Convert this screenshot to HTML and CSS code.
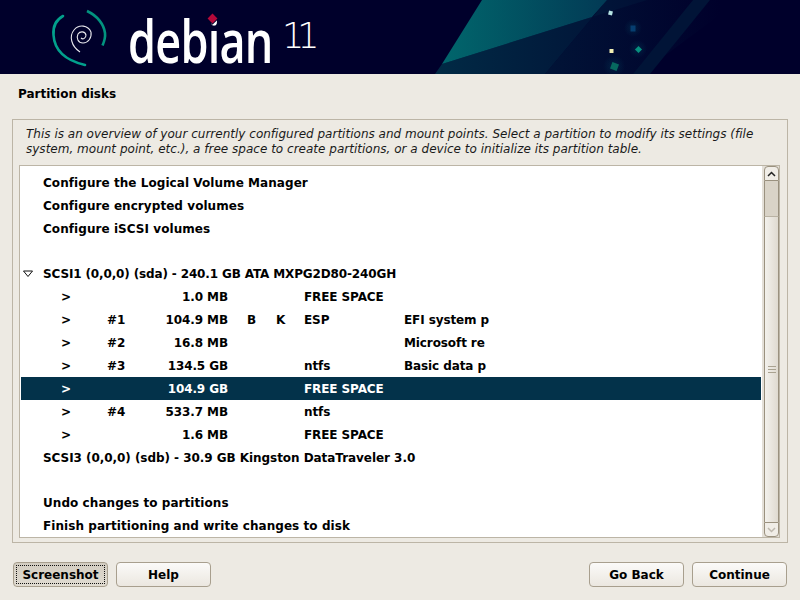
FILE: index.html
```html
<!DOCTYPE html>
<html lang="en">
<head>
<meta charset="utf-8">
<title>Partition disks</title>
<link rel="stylesheet" href="styles.css">
</head>
<body>
<header class="banner">
  <svg class="rays" viewBox="0 0 800 74" width="800" height="74" aria-hidden="true">
    <defs>
      <linearGradient id="teal" x1="442" y1="0" x2="607" y2="0" gradientUnits="userSpaceOnUse">
        <stop offset="0" stop-color="#01666c"/>
        <stop offset="1" stop-color="#023a55"/>
      </linearGradient>
      <linearGradient id="navy" x1="435" y1="0" x2="650" y2="0" gradientUnits="userSpaceOnUse">
        <stop offset="0" stop-color="#012a45"/>
        <stop offset="1" stop-color="#010f35"/>
      </linearGradient>
      <linearGradient id="far" x1="545" y1="0" x2="720" y2="0" gradientUnits="userSpaceOnUse">
        <stop offset="0" stop-color="#011437"/>
        <stop offset="1" stop-color="#00002b"/>
      </linearGradient>
      <radialGradient id="glow">
        <stop offset="0" stop-color="#04506a" stop-opacity=".3"/>
        <stop offset="1" stop-color="#04506a" stop-opacity="0"/>
      </radialGradient>
    </defs>
    <polygon points="545,74 607,0 740,0 640,74" fill="url(#far)"/>
    <polygon points="435,74 442,64 592,17 647,0 607,0 545,74" fill="url(#navy)"/>
    <polygon points="633,74 693,0 710,0 650,74" fill="#011437"/>
    <polygon points="482,0 607,0 592,17 442,64" fill="url(#teal)"/>
    <circle cx="633" cy="28" r="9" fill="url(#glow)"/>
    <circle cx="638" cy="49" r="9" fill="url(#glow)"/>
    <circle cx="614" cy="66" r="11" fill="url(#glow)"/>
    <rect x="608.500" y="11" width="4" height="4" transform="rotate(15 610.500 13)" fill="#b5e3e3"/>
    <rect x="630.500" y="25.500" width="5" height="6" fill="#063e70"/>
    <rect x="609.500" y="49" width="4" height="4" fill="#f2efb4"/>
    <rect x="636" y="47" width="5" height="5" transform="rotate(45 638.500 49.500)" fill="#07907f"/>
    <rect x="611" y="63" width="7" height="7" transform="rotate(20 614.500 66.500)" fill="#07695f"/>
  </svg>
  <svg class="swirl" viewBox="0 0 90 65" width="90" height="65" aria-hidden="true">
    <path d="M33 11C24 16 23 24 23.500 30C24.500 47 38 56 55 60" fill="none" stroke="#02a08c" stroke-width="2.600" stroke-linecap="round"/>
    <path d="M57 6C68 11 74 20 75 28C75.500 32 74 37 72.500 40.500" fill="none" stroke="#02937f" stroke-width="2.600"/>
    <path d="M61 27C58 20 49 19 44 25C39 31 41 41 50 47M61 27C62 33 58 38 53 38C48 38 46 33 48 29C50 26 55 26 56 30C56 33 53 35 51 33" fill="none" stroke="#e8e8ee" stroke-width="1.100"/>
  </svg>
  <div class="wordmark">
    <span class="debian">debian</span>
    <span class="diamond"></span>
    <span class="version">11</span>
  </div>
</header>

<main class="page">
  <h1 class="title">Partition disks</h1>
  <section class="frame">
    <p class="help">This is an overview of your currently configured partitions and mount points. Select a partition to modify its settings (file system, mount point, etc.), a free space to create partitions, or a device to initialize its partition table.</p>
    <div class="listbox">
      <div class="list">
        <div class="row">Configure the Logical Volume Manager</div>
        <div class="row">Configure encrypted volumes</div>
        <div class="row">Configure iSCSI volumes</div>
        <div class="row blank"></div>
        <div class="row device-a"><svg class="expander" viewBox="0 0 12 8" width="12" height="8" aria-hidden="true"><path d="M1.500 1H10.500L6 6.500Z" fill="#fff" stroke="#111" stroke-width="1"/></svg>SCSI1 (0,0,0) (sda) - 240.1 GB ATA MXPG2D80-240GH</div>
        <div class="row part"><span>&gt;</span><span></span><span class="size">1.0 MB</span><span></span><span></span><span></span><span>FREE SPACE</span><span></span></div>
        <div class="row part"><span>&gt;</span><span>#1</span><span class="size">104.9 MB</span><span></span><span>B</span><span>K</span><span>ESP</span><span>EFI system p</span></div>
        <div class="row part"><span>&gt;</span><span>#2</span><span class="size">16.8 MB</span><span></span><span></span><span></span><span></span><span>Microsoft re</span></div>
        <div class="row part"><span>&gt;</span><span>#3</span><span class="size">134.5 GB</span><span></span><span></span><span></span><span>ntfs</span><span>Basic data p</span></div>
        <div class="row part selected"><span>&gt;</span><span></span><span class="size">104.9 GB</span><span></span><span></span><span></span><span>FREE SPACE</span><span></span></div>
        <div class="row part"><span>&gt;</span><span>#4</span><span class="size">533.7 MB</span><span></span><span></span><span></span><span>ntfs</span><span></span></div>
        <div class="row part"><span>&gt;</span><span></span><span class="size">1.6 MB</span><span></span><span></span><span></span><span>FREE SPACE</span><span></span></div>
        <div class="row device-b">SCSI3 (0,0,0) (sdb) - 30.9 GB Kingston DataTraveler 3.0</div>
        <div class="row blank"></div>
        <div class="row">Undo changes to partitions</div>
        <div class="row">Finish partitioning and write changes to disk</div>
      </div>
      <div class="scrollbar" aria-hidden="true">
        <div class="step step-up"><svg viewBox="0 0 9 6" width="9" height="6"><path d="M1 5L4.500 1.500L8 5" fill="none" stroke="#222" stroke-width="1.500"/></svg></div>
        <div class="trough"></div>
        <div class="thumb"><i></i><i></i><i></i></div>
        <div class="step step-down"><svg viewBox="0 0 9 6" width="9" height="6"><path d="M1 1L4.500 4.500L8 1" fill="none" stroke="#bdb8ae" stroke-width="1.500"/></svg></div>
      </div>
    </div>
  </section>
  <footer class="actions">
    <div class="group">
      <button class="btn btn-focus" type="button"><span>Screenshot</span></button>
      <button class="btn" type="button">Help</button>
    </div>
    <div class="group">
      <button class="btn" type="button">Go Back</button>
      <button class="btn" type="button">Continue</button>
    </div>
  </footer>
</main>
</body>
</html>
```

FILE: styles.css
```css
* { box-sizing: border-box; }

html, body { margin: 0; padding: 0; }

body {
  width: 800px;
  height: 600px;
  overflow: hidden;
  background: #edeae3;
  color: #000;
  font-family: "DejaVu Sans", sans-serif;
  font-size: 12px;
  display: flex;
  flex-direction: column;
}

.banner {
  position: relative;
  flex: 0 0 74px;
  height: 74px;
  background: #00002b;
}

.rays, .swirl { position: absolute; top: 0; left: 0; }
.swirl { left: 30px; top: 5px; }

.wordmark { position: absolute; inset: 0; color: #fff; }

.debian {
  position: absolute;
  left: 128px;
  top: 7px;
  font-family: "Open Sans", sans-serif;
  font-size: 60px;
  font-weight: 600;
  line-height: 66px;
  letter-spacing: -1px;
  transform: scaleX(.75);
  transform-origin: left center;
}

.diamond {
  position: absolute;
  left: 209px;
  top: 15px;
  width: 7px;
  height: 7px;
  background: #b5093a;
  transform: rotate(45deg);
  box-shadow: 0 0 0 1px #00002b;
}

.version {
  position: absolute;
  left: 282px;
  top: 14px;
  font-family: "DejaVu Sans ExtraLight", "DejaVu Sans", sans-serif;
  font-weight: 200;
  font-size: 35px;
  line-height: 44px;
  letter-spacing: -7px;
}

.page {
  flex: 1;
  display: flex;
  flex-direction: column;
  padding: 0 12px 13px;
}

.title {
  margin: 13px 0 0 6px;
  height: 32px;
  font-size: 12px;
  font-weight: bold;
  line-height: 15px;
}

.frame {
  height: 424px;
  border: 1px solid #bcb5a6;
  padding: 7px 7px 4px 6px;
  display: flex;
  flex-direction: column;
}

.help {
  margin: 0 0 0 7px;
  height: 38px;
  font-size: 12px;
  font-style: italic;
  line-height: 15px;
  color: #1a1a1a;
  letter-spacing: .01px;
}

.listbox {
  flex: 1;
  display: flex;
  border: 1px solid #bcb5a6;
  background: #fff;
  min-height: 0;
}

.list {
  flex: 1;
  padding: 5px 0 0 1px;
  overflow: hidden;
  font-weight: bold;
  font-size: 12px;
  letter-spacing: .06px;
}

.row {
  position: relative;
  height: 23px;
  line-height: 25px;
  padding-left: 22px;
  white-space: nowrap;
}

.row.blank { height: 22px; }

.device-a { letter-spacing: -.14px; }
.device-b { letter-spacing: -.05px; }

.expander { position: absolute; left: 1px; top: 8px; }

.part {
  display: grid;
  grid-template-columns: 46px 34px 87px 19px 29px 28px 100px 1fr;
  padding-left: 40px;
  letter-spacing: -.1px;
}

.size { text-align: right; }

.selected { background: #03324a; color: #fff; }

.scrollbar {
  flex: 0 0 18px;
  display: flex;
  flex-direction: column;
  padding: 0 0 0 3px;
  background: linear-gradient(90deg, #fff 0 1px, #e4e0d8 1px);
}

.step {
  flex: 0 0 15px;
  display: flex;
  align-items: center;
  justify-content: center;
  background: #f0ede7;
  border: 1px solid #9a917f;
}

.step-up { border-radius: 4px 4px 0 0; }
.step-down { border-radius: 0 0 4px 4px; }

.trough {
  flex: 0 0 35px;
  background: #d9d3c7;
  border-left: 1px solid #9a917f;
  border-right: 1px solid #9a917f;
}

.thumb {
  flex: 1;
  display: flex;
  flex-direction: column;
  align-items: center;
  justify-content: center;
  gap: 2px;
  background: linear-gradient(90deg, #f3f1ec, #dfdad0);
  border: 1px solid #9a917f;
  border-top-color: #b9b2a3;
  border-bottom: 0;
}

.thumb i {
  display: block;
  width: 8px;
  height: 1px;
  background: #a9a290;
}

.actions {
  margin-top: 19px;
  display: flex;
  justify-content: space-between;
  padding: 0 1px;
}

.group { display: flex; gap: 8px; }

.btn {
  width: 95px;
  height: 25px;
  padding: 0;
  font: bold 12px/1 "DejaVu Sans", sans-serif;
  color: #000;
  background: linear-gradient(180deg, #fbfaf8, #ebe7e0);
  border: 1px solid #a89f8e;
  border-radius: 4px;
}

.btn-focus {
  background: linear-gradient(180deg, #d3cdc1, #e0dbd1);
  padding: 2px;
}

.btn-focus span {
  display: flex;
  align-items: center;
  justify-content: center;
  height: 100%;
  outline: 1px dotted #111;
  outline-offset: -1px;
}
```
